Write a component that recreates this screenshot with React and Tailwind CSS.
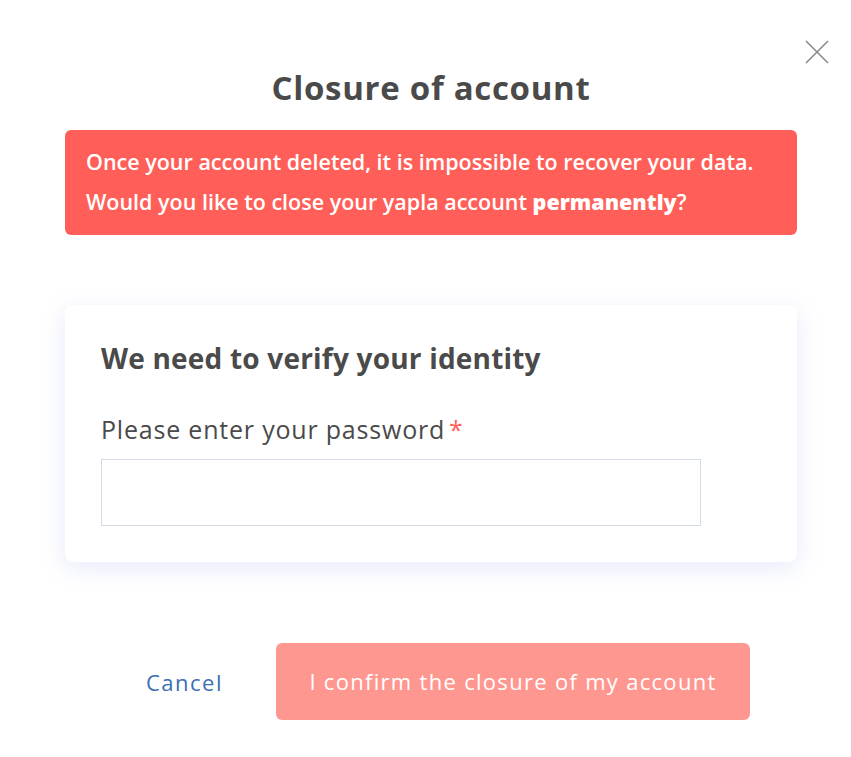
import React, { useState } from 'react';

const CloseIcon = () => (
  <svg width="24" height="24" viewBox="0 0 24 24" fill="none" stroke="#8a8a8a" strokeWidth="1.6">
    <path d="M1 1 L23 23 M23 1 L1 23" />
  </svg>
);

const App = () => {
  const [password, setPassword] = useState('');

  return (
    <div className="w-[851px] h-[757px] bg-white relative font-['Open_Sans',sans-serif] text-[#4a4a4a]">
      {/* close button */}
      <button className="absolute left-[805px] top-[40px] w-[24px] h-[24px]">
        <CloseIcon />
      </button>

      <div className="flex flex-col pl-[65px] pr-[54px] pt-[65px]">
        <h1 className="text-center text-[33px] font-bold leading-[46px] tracking-[0.7px]">Closure of account</h1>

        {/* warning */}
        <div className="mt-[19px] h-[105px] rounded-[6px] bg-[#ff5f58] px-[21px] pt-[12px] text-white text-[21.5px] font-semibold leading-[40px]">
          <p>Once your account deleted, it is impossible to recover your data.</p>
          <p>
            Would you like to close your yapla account <span className="font-extrabold">permanently</span>?
          </p>
        </div>

        {/* identity card */}
        <div className="mt-[70px] h-[257px] rounded-[8px] bg-white shadow-[0_6px_24px_rgba(120,140,230,0.18)] px-[36px] pt-[34px]">
          <h2 className="text-[28px] font-bold leading-[38px] tracking-[0.2px]">We need to verify your identity</h2>
          <label className="mt-[36px] block text-[25px] leading-[32px] tracking-[0.8px]">
            Please enter your password<span className="ml-[4px] text-[#ff5f58]">*</span>
          </label>
          <input
            type="password"
            value={password}
            onChange={(e) => setPassword(e.target.value)}
            className="mt-[14px] block w-[600px] h-[67px] border border-[#d3dbe5] bg-white outline-none px-3"
          />
        </div>

        {/* actions */}
        <div className="mt-[81px] flex items-center pl-[81px]">
          <button className="w-[77px] text-left text-[22px] text-[#3c6eb4] leading-[30px] tracking-[1.5px]">Cancel</button>
          <button className="ml-[53px] w-[474px] h-[77px] rounded-[6px] bg-[#ff9791] text-white text-[22px] tracking-[1.3px]">
            I confirm the closure of my account
          </button>
        </div>
      </div>
    </div>
  );
};

export default App;
